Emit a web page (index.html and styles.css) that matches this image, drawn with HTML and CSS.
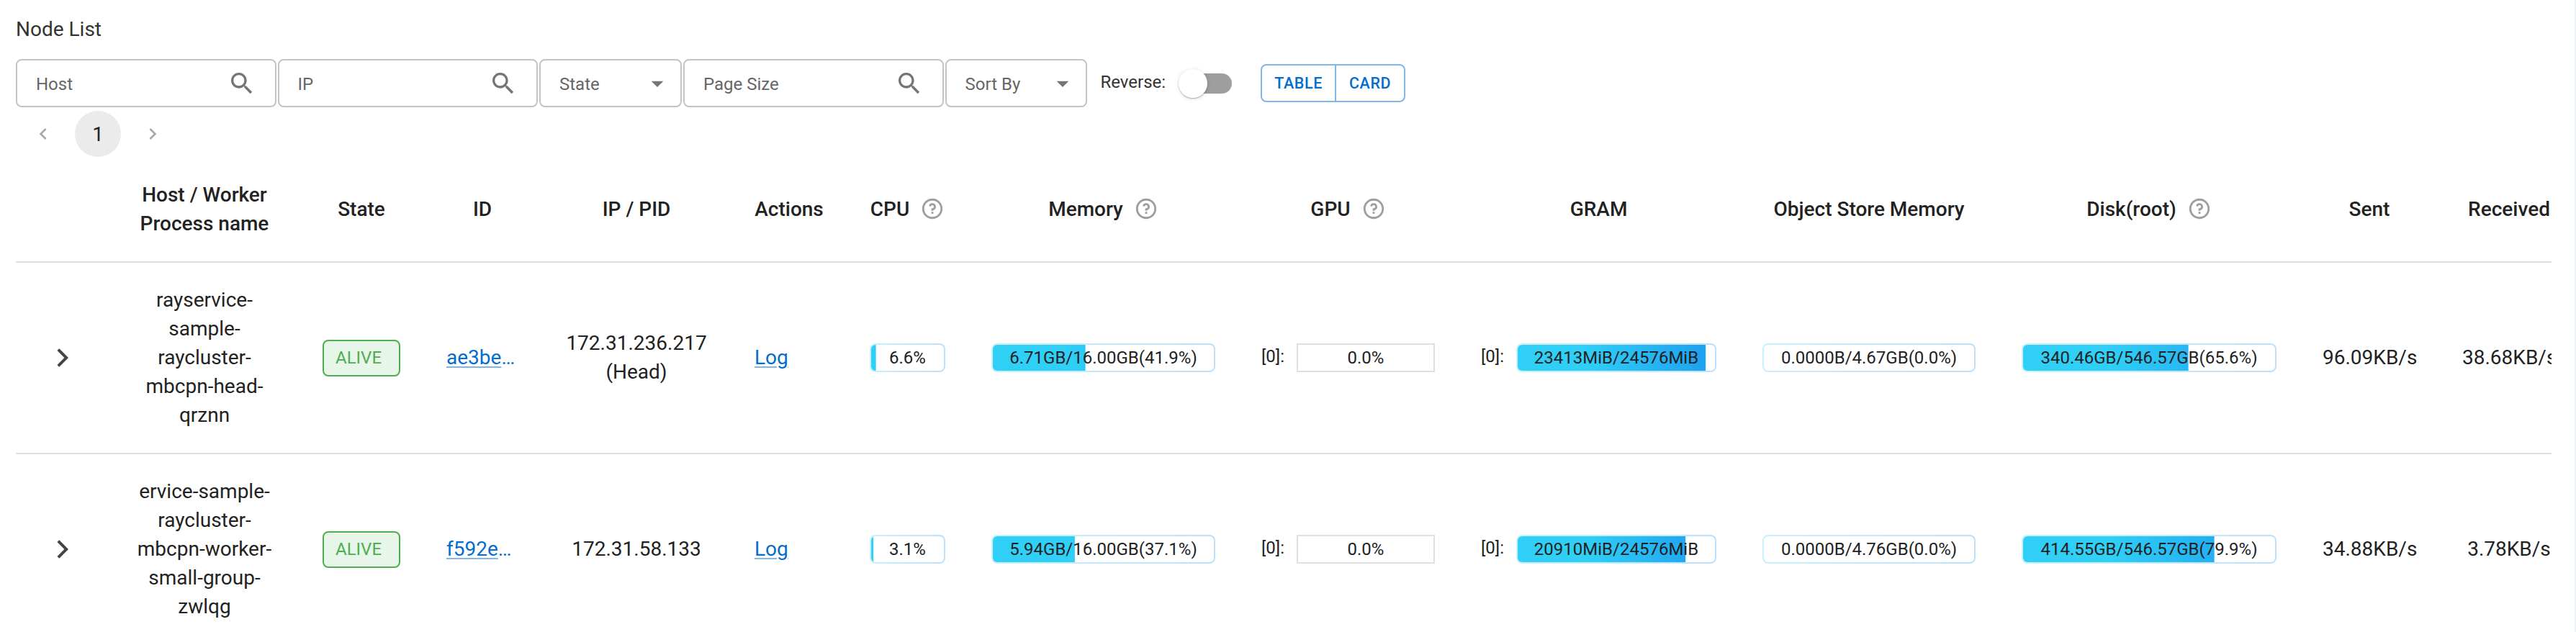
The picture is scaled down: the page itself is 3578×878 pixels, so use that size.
FILE: index.html
```html
<!DOCTYPE html>
<html>
<head>
    <title>Node List</title>
    <link rel="stylesheet" href="styles.css">
</head>
<body>
    <div id="node-list">
        <h1 class="title">Node List</h1>

        <div class="filters">
            <div class="field field-search">
                <span>Host</span>
                <svg class="field-icon" viewBox="0 0 24 24"><path d="M15.5 14h-.79l-.28-.27C15.41 12.59 16 11.11 16 9.5 16 5.91 13.09 3 9.5 3S3 5.91 3 9.5 5.91 16 9.5 16c1.61 0 3.09-.59 4.23-1.57l.27.28v.79l5 4.99L20.49 19l-4.99-5zm-6 0C7.01 14 5 11.99 5 9.5S7.01 5 9.5 5 14 7.01 14 9.5 11.99 14 9.5 14z"/></svg>
            </div>
            <div class="field field-search">
                <span>IP</span>
                <svg class="field-icon" viewBox="0 0 24 24"><path d="M15.5 14h-.79l-.28-.27C15.41 12.59 16 11.11 16 9.5 16 5.91 13.09 3 9.5 3S3 5.91 3 9.5 5.91 16 9.5 16c1.61 0 3.09-.59 4.23-1.57l.27.28v.79l5 4.99L20.49 19l-4.99-5zm-6 0C7.01 14 5 11.99 5 9.5S7.01 5 9.5 5 14 7.01 14 9.5 11.99 14 9.5 14z"/></svg>
            </div>
            <div class="field field-select state-select">
                <span>State</span>
                <svg class="field-icon" viewBox="0 0 24 24"><path d="M7 10l5 5 5-5z"/></svg>
            </div>
            <div class="field field-search">
                <span>Page Size</span>
                <svg class="field-icon" viewBox="0 0 24 24"><path d="M15.5 14h-.79l-.28-.27C15.41 12.59 16 11.11 16 9.5 16 5.91 13.09 3 9.5 3S3 5.91 3 9.5 5.91 16 9.5 16c1.61 0 3.09-.59 4.23-1.57l.27.28v.79l5 4.99L20.49 19l-4.99-5zm-6 0C7.01 14 5 11.99 5 9.5S7.01 5 9.5 5 14 7.01 14 9.5 11.99 14 9.5 14z"/></svg>
            </div>
            <div class="field field-select sort-select">
                <span>Sort By</span>
                <svg class="field-icon" viewBox="0 0 24 24"><path d="M7 10l5 5 5-5z"/></svg>
            </div>
            <span class="reverse-label">Reverse:</span>
            <span class="switch"><span class="switch-thumb"></span></span>
            <div class="view-buttons">
                <button class="table-button">TABLE</button>
                <button class="card-button">CARD</button>
            </div>
        </div>

        <div class="pagination">
            <span class="page-item page-arrow">
                <svg viewBox="0 0 24 24"><path d="M15.41 7.41L14 6l-6 6 6 6 1.41-1.41L10.83 12z"/></svg>
            </span>
            <span class="page-item page-current">1</span>
            <span class="page-item page-arrow">
                <svg viewBox="0 0 24 24"><path d="M10 6L8.59 7.41 13.17 12l-4.58 4.59L10 18l6-6z"/></svg>
            </span>
        </div>

        <div class="table-wrap">
            <table>
                <colgroup>
                    <col class="col-expand">
                    <col class="col-host">
                    <col class="col-state">
                    <col class="col-id">
                    <col class="col-ip">
                    <col class="col-actions">
                    <col class="col-cpu">
                    <col class="col-memory">
                    <col class="col-gpu">
                    <col class="col-gram">
                    <col class="col-object">
                    <col class="col-disk">
                    <col class="col-sent">
                    <col class="col-received">
                </colgroup>
                <thead>
                    <tr>
                        <th></th>
                        <th>Host / Worker Process name</th>
                        <th>State</th>
                        <th>ID</th>
                        <th>IP / PID</th>
                        <th>Actions</th>
                        <th>CPU<svg class="help" viewBox="0 0 24 24"><path d="M12 22C6.477 22 2 17.523 2 12S6.477 2 12 2s10 4.477 10 10-4.477 10-10 10zm0-2a8 8 0 1 0 0-16 8 8 0 0 0 0 16zm-1-5h2v2h-2v-2zm2-1.645V14h-2v-1.5a1 1 0 0 1 1-1 1.5 1.5 0 1 0-1.471-1.794l-1.962-.393A3.501 3.501 0 1 1 13 13.355z"/></svg></th>
                        <th>Memory<svg class="help" viewBox="0 0 24 24"><path d="M12 22C6.477 22 2 17.523 2 12S6.477 2 12 2s10 4.477 10 10-4.477 10-10 10zm0-2a8 8 0 1 0 0-16 8 8 0 0 0 0 16zm-1-5h2v2h-2v-2zm2-1.645V14h-2v-1.5a1 1 0 0 1 1-1 1.5 1.5 0 1 0-1.471-1.794l-1.962-.393A3.501 3.501 0 1 1 13 13.355z"/></svg></th>
                        <th>GPU<svg class="help" viewBox="0 0 24 24"><path d="M12 22C6.477 22 2 17.523 2 12S6.477 2 12 2s10 4.477 10 10-4.477 10-10 10zm0-2a8 8 0 1 0 0-16 8 8 0 0 0 0 16zm-1-5h2v2h-2v-2zm2-1.645V14h-2v-1.5a1 1 0 0 1 1-1 1.5 1.5 0 1 0-1.471-1.794l-1.962-.393A3.501 3.501 0 1 1 13 13.355z"/></svg></th>
                        <th>GRAM</th>
                        <th>Object Store Memory</th>
                        <th>Disk(root)<svg class="help" viewBox="0 0 24 24"><path d="M12 22C6.477 22 2 17.523 2 12S6.477 2 12 2s10 4.477 10 10-4.477 10-10 10zm0-2a8 8 0 1 0 0-16 8 8 0 0 0 0 16zm-1-5h2v2h-2v-2zm2-1.645V14h-2v-1.5a1 1 0 0 1 1-1 1.5 1.5 0 1 0-1.471-1.794l-1.962-.393A3.501 3.501 0 1 1 13 13.355z"/></svg></th>
                        <th>Sent</th>
                        <th>Received</th>
                    </tr>
                </thead>
                <tbody>
                    <tr>
                        <td><svg class="expand" viewBox="0 0 24 24"><path d="M13.172 12l-4.95-4.95 1.414-1.414L16 12l-6.364 6.364-1.414-1.414z"/></svg></td>
                        <td>rayservice-sample-raycluster-mbcpn-head-qrznn</td>
                        <td><span class="badge">ALIVE</span></td>
                        <td class="left"><a class="link">ae3be</a><span class="link-more">…</span></td>
                        <td>172.31.236.217<br>(Head)</td>
                        <td class="left"><a class="link">Log</a></td>
                        <td><div class="bar"><div class="bar-fill" style="clip-path: inset(0 93.4% 0 0)"></div><span class="bar-text">6.6%</span></div></td>
                        <td><div class="bar"><div class="bar-fill" style="clip-path: inset(0 58.1% 0 0)"></div><span class="bar-text">6.71GB/16.00GB(41.9%)</span></div></td>
                        <td><div class="device"><span class="device-label">[0]:</span><div class="bar bar-empty"><span class="bar-text">0.0%</span></div></div></td>
                        <td><div class="device"><span class="device-label">[0]:</span><div class="bar"><div class="bar-fill" style="clip-path: inset(0 4.7% 0 0)"></div><span class="bar-text">23413MiB/24576MiB</span></div></div></td>
                        <td><div class="bar"><span class="bar-text">0.0000B/4.67GB(0.0%)</span></div></td>
                        <td><div class="bar"><div class="bar-fill" style="clip-path: inset(0 34.4% 0 0)"></div><span class="bar-text">340.46GB/546.57GB(65.6%)</span></div></td>
                        <td>96.09KB/s</td>
                        <td>38.68KB/s</td>
                    </tr>
                    <tr>
                        <td><svg class="expand" viewBox="0 0 24 24"><path d="M13.172 12l-4.95-4.95 1.414-1.414L16 12l-6.364 6.364-1.414-1.414z"/></svg></td>
                        <td>ervice-sample-raycluster-mbcpn-worker-small-group-zwlqg</td>
                        <td><span class="badge">ALIVE</span></td>
                        <td class="left"><a class="link">f592e</a><span class="link-more">…</span></td>
                        <td>172.31.58.133</td>
                        <td class="left"><a class="link">Log</a></td>
                        <td><div class="bar"><div class="bar-fill" style="clip-path: inset(0 96.9% 0 0)"></div><span class="bar-text">3.1%</span></div></td>
                        <td><div class="bar"><div class="bar-fill" style="clip-path: inset(0 62.9% 0 0)"></div><span class="bar-text">5.94GB/16.00GB(37.1%)</span></div></td>
                        <td><div class="device"><span class="device-label">[0]:</span><div class="bar bar-empty"><span class="bar-text">0.0%</span></div></div></td>
                        <td><div class="device"><span class="device-label">[0]:</span><div class="bar"><div class="bar-fill" style="clip-path: inset(0 14.9% 0 0)"></div><span class="bar-text">20910MiB/24576MiB</span></div></div></td>
                        <td><div class="bar"><span class="bar-text">0.0000B/4.76GB(0.0%)</span></div></td>
                        <td><div class="bar"><div class="bar-fill" style="clip-path: inset(0 24.1% 0 0)"></div><span class="bar-text">414.55GB/546.57GB(79.9%)</span></div></td>
                        <td>34.88KB/s</td>
                        <td>3.78KB/s</td>
                    </tr>
                </tbody>
            </table>
        </div>
    </div>
</body>
</html>
```

FILE: styles.css
```css
body {
    box-sizing: border-box;
    font-family: Roboto, Arial, sans-serif;
    background-color: #fff;
    color: #222;
    margin: 0;
    height: 878px;
    overflow: hidden;
    border-right: 2px solid #eef1f5;
}

#node-list {
    padding: 21px 32px 0 22px;
}

.title {
    font-size: 28px;
    font-weight: 400;
    line-height: 40px;
    color: #333;
    margin: 0 0 21px;
}

/* filter row */
.filters {
    display: flex;
    align-items: center;
    gap: 2px;
    height: 67px;
}

.field {
    box-sizing: border-box;
    display: flex;
    align-items: center;
    justify-content: space-between;
    height: 67px;
    padding-top: 2px;
    padding-left: 26px;
    border: 2px solid #c4c4c4;
    border-radius: 8px;
    font-size: 24px;
    color: #666;
}

.field-search {
    width: 361.5px;
    padding-right: 26px;
}

.field-select {
    padding-right: 12px;
}

.state-select {
    width: 198px;
}

.sort-select {
    width: 197px;
}

.field-icon {
    width: 40px;
    height: 40px;
    margin-top: -2px;
    fill: #757575;
}

.reverse-label {
    margin-top: -3px;
    margin-left: 17px;
    font-size: 24px;
    color: #333;
}

.switch {
    position: relative;
    width: 60px;
    height: 28px;
    margin-left: 30px;
    background-color: #9e9e9e;
    border-radius: 14px;
}

.switch-thumb {
    position: absolute;
    left: -14px;
    top: -6px;
    width: 40px;
    height: 40px;
    background-color: #fff;
    border-radius: 50%;
    box-shadow: 0 2px 2px -1px rgba(0, 0, 0, 0.2), 0 1px 2px rgba(0, 0, 0, 0.14), 0 1px 6px rgba(0, 0, 0, 0.12);
}

.view-buttons {
    display: flex;
    margin-left: 38px;
}

.view-buttons button {
    box-sizing: border-box;
    height: 53px;
    padding: 0;
    font-family: inherit;
    font-size: 21.5px;
    font-weight: 500;
    letter-spacing: 0.6px;
    color: #036dcf;
    background-color: #fff;
    border: 2px solid #81b6e7;
}

.table-button {
    width: 105px;
    border-radius: 8px 0 0 8px;
}

.card-button {
    width: 98px;
    margin-left: -2px;
    border-radius: 0 8px 8px 0;
}

/* pagination */
.pagination {
    display: flex;
    gap: 12px;
    height: 64px;
    margin-top: 5px;
    padding-left: 6px;
}

.page-item {
    display: flex;
    align-items: center;
    justify-content: center;
    width: 64px;
    height: 64px;
    font-size: 28px;
    border-radius: 50%;
}

.page-current {
    background-color: #ebebeb;
}

.page-arrow svg {
    width: 32px;
    height: 32px;
    fill: #a8a8a8;
}

/* table */
.table-wrap {
    margin-top: 1px;
    overflow: hidden;
}

table {
    table-layout: fixed;
    width: 3560px;
    border-collapse: collapse;
}

.col-expand { width: 130px; }
.col-host { width: 264px; }
.col-state { width: 172px; }
.col-id { width: 164px; }
.col-ip { width: 264px; }
.col-actions { width: 160px; }
.col-cpu { width: 169px; }
.col-memory { width: 375px; }
.col-gpu { width: 305px; }
.col-gram { width: 391px; }
.col-object { width: 360px; }
.col-disk { width: 418px; }
.col-sent { width: 194px; }
.col-received { width: 194px; }

th, td {
    padding: 32px;
    font-size: 28px;
    line-height: 40px;
    text-align: center;
    color: #222;
    border-bottom: 2px solid #e0e0e0;
}

th {
    font-weight: 500;
}

td.left {
    text-align: left;
}

.help {
    width: 34px;
    height: 34px;
    margin-left: 15px;
    vertical-align: -7px;
    fill: #9e9e9e;
}

.expand {
    display: block;
    width: 48px;
    height: 48px;
    margin: 0 auto;
    fill: #444;
}

.badge {
    display: inline-flex;
    align-items: center;
    box-sizing: border-box;
    height: 51px;
    padding: 0 24px 0 16px;
    font-size: 24px;
    color: #4caf50;
    background-color: #e8f5e9;
    border: 2px solid #4caf50;
    border-radius: 8px;
}

.link {
    color: #036dcf;
    text-decoration: underline;
    text-decoration-color: #81b6e7;
    text-decoration-thickness: 2px;
    text-underline-offset: 3px;
}

.link-more {
    color: #036dcf;
    letter-spacing: -2px;
}

/* usage bars */
.bar {
    position: relative;
    box-sizing: border-box;
    height: 40px;
    overflow: hidden;
    text-align: center;
    border: 2px solid transparent;
    border-radius: 8px;
    background: linear-gradient(#fff, #fff) padding-box, linear-gradient(90deg, #c7f2fc, #bde0fb) border-box;
}

.bar-fill {
    position: absolute;
    top: 0;
    right: 0;
    bottom: 0;
    left: 0;
    background: linear-gradient(80deg, #2fcff6 35%, #1c9cf0 100%);
}

.bar-text {
    position: relative;
    display: block;
    font-size: 24px;
    line-height: 36px;
    white-space: nowrap;
}

.bar-empty {
    background: #fff;
    border-color: #e0e0e0;
    border-radius: 0;
}

.device {
    display: flex;
    align-items: center;
}

.device-label {
    flex: none;
    width: 49px;
    margin-top: -4px;
    font-size: 24px;
    line-height: 36px;
    text-align: left;
}

.device .bar {
    flex: 1;
}
```
